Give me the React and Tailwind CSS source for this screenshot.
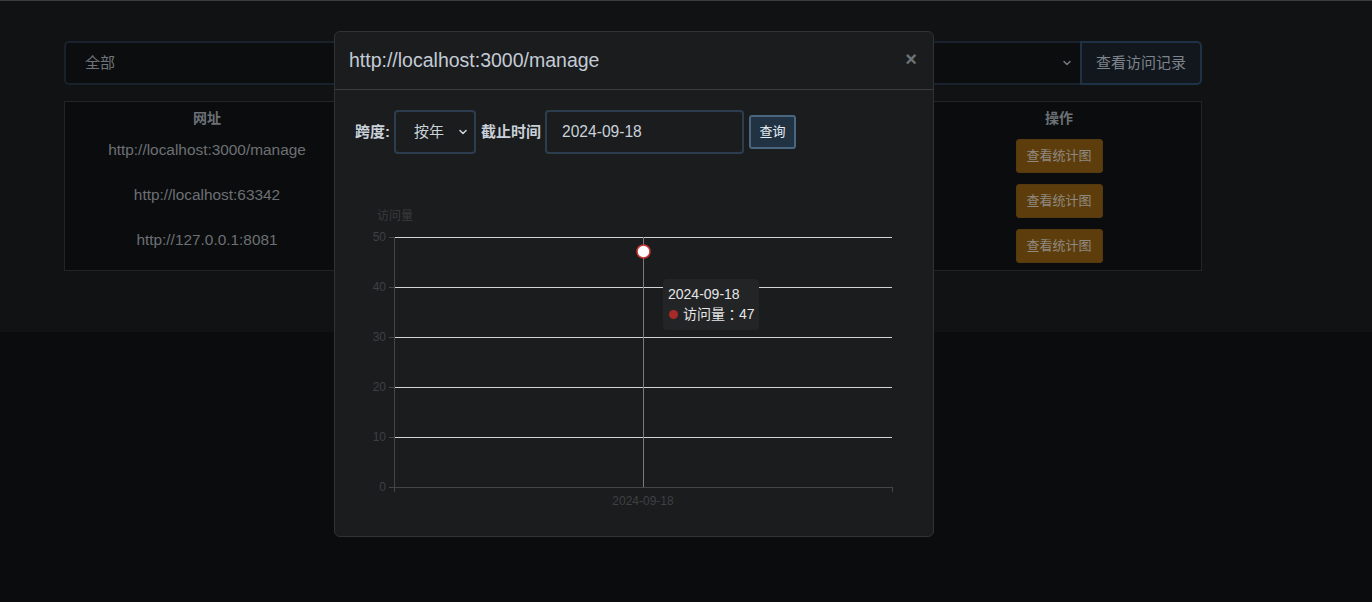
import React from "react";

const FONT = { fontFamily: '"Liberation Sans", "Noto Sans CJK SC", sans-serif' };
const FONT_TC = { fontFamily: '"Noto Sans CJK TC", "Noto Sans CJK SC", sans-serif' };

function Chevron({ className }) {
  return (
    <svg className={className} width="10" height="10" viewBox="0 0 10 10" fill="none">
      <path d="M2 3.5 L5 6.5 L8 3.5" stroke="currentColor" strokeWidth="1.6" strokeLinecap="round" strokeLinejoin="round" />
    </svg>
  );
}

const rows = [
  "http://localhost:3000/manage",
  "http://localhost:63342",
  "http://127.0.0.1:8081",
];

function Chart() {
  const levels = [50, 40, 30, 20, 10, 0];
  const yOf = (v) => 317 - v * 5;
  return (
    <div className="relative h-[350px] w-full">
      <svg width="598" height="350" viewBox="0 0 598 350" className="block">
        <text x="42" y="47" fontSize="12" fill="#3a3b3d" dominantBaseline="middle" style={FONT}>访问量</text>
        {levels.map((v) => (
          <g key={v}>
            {v !== 0 && (
              <line x1="59" x2="557" y1={yOf(v) + 0.5} y2={yOf(v) + 0.5} stroke="#d4d4d4" strokeWidth="1" />
            )}
            <line x1="54" x2="59" y1={yOf(v) + 0.5} y2={yOf(v) + 0.5} stroke="#434547" strokeWidth="1" />
            <text x="51" y={yOf(v) + 1} fontSize="12" fill="#3e4042" textAnchor="end" dominantBaseline="middle" style={FONT}>{v}</text>
          </g>
        ))}
        <line x1="59.5" x2="59.5" y1="67" y2="322" stroke="#434547" strokeWidth="1" />
        <line x1="59" x2="558" y1="317.5" y2="317.5" stroke="#434547" strokeWidth="1" />
        <line x1="557.5" x2="557.5" y1="317" y2="322" stroke="#434547" strokeWidth="1" />
        <line x1="308.5" x2="308.5" y1="67" y2="317" stroke="#7a7b7d" strokeWidth="1" />
        <text x="308" y="332" fontSize="12" fill="#3e4042" textAnchor="middle" dominantBaseline="middle" style={FONT}>2024-09-18</text>
        <circle cx="308.5" cy="81.5" r="6.5" fill="#ffffff" stroke="#c23531" strokeWidth="1.5" />
      </svg>
      <div
        className="absolute left-[328px] top-[109px] h-[51px] whitespace-nowrap rounded bg-[#222426] pl-[5px] pr-[4px] pt-[5px] text-[14px] leading-[20px] text-[#e6e6e6]"
        style={FONT}
      >
        <div>2024-09-18</div>
        <div className="flex items-center">
          <span className="mr-[5px] ml-[1px] inline-block h-[9px] w-[9px] rounded-full bg-[#a82a28]" />
          <span>访问量</span>
          <span style={FONT_TC}>：</span>
          <span>47</span>
        </div>
      </div>
    </div>
  );
}

export default function App() {
  return (
    <div className="min-h-[602px] bg-[#0b0c0d]" style={FONT}>
      <div className="border-t border-[#3c3d3f] bg-[#111214] pb-[61px]">
        <div className="mx-[64px] w-[1138px] pt-[40px]">
          <div className="flex h-[44px]">
            <div className="flex flex-1 items-center justify-between rounded-l-[5px] border-2 border-r-0 border-[#18212c] bg-[#0c0d0e] pl-[19px] pr-[8px] text-[15px] text-[#6f757b]">
              <span>全部</span>
              <Chevron className="text-[#6f757b]" />
            </div>
            <div className="flex w-[122px] items-center justify-center rounded-r-[5px] border-2 border-[#1f3245] bg-[#12171d] text-[15px] text-[#7d848c]">
              查看访问记录
            </div>
          </div>
          <div className="mt-[16px] border border-[#232426] bg-[#0b0c0d]">
            <div className="grid h-[33px] grid-cols-4 items-center text-center text-[14px] font-bold text-[#6b7177]">
              <div>网址</div>
              <div />
              <div />
              <div>操作</div>
            </div>
            {rows.map((url) => (
              <div key={url} className="grid h-[45px] grid-cols-4 text-center text-[15.4px] text-[#6b7075]">
                <div className="pt-[5px] leading-[20px]">{url}</div>
                <div />
                <div />
                <div className="flex justify-center pt-[4px]">
                  <div className="flex h-[34px] w-[87px] items-center justify-center rounded-[3px] border border-[#553a0f] bg-[#5e3d0c] text-[13px] text-[#8e8a82]">
                    查看统计图
                  </div>
                </div>
              </div>
            ))}
          </div>
        </div>
      </div>

      {/* Modal */}
      <div className="absolute left-[334px] top-[31px] w-[600px] rounded-[6px] border border-[#303234] bg-[#1b1c1e]">
        <div className="flex h-[58px] items-center justify-between border-b border-[#3b3c3e] pl-[14px] pr-[16px]">
          <span className="text-[19.5px] text-[#c3cbd5]">http://localhost:3000/manage</span>
          <span className="-mt-[4px] text-[20px] font-bold leading-none text-[#6e7378]">×</span>
        </div>
        <div className="px-0 pb-[16px] pt-[20px]">
          <div className="flex items-center pl-[20px]">
            <span className="text-[15px] font-bold text-[#c9d1d9]">跨度:</span>
            <div className="ml-[4px] flex h-[44px] w-[82px] items-center justify-between rounded-[4px] border-2 border-[#2c3d4f] pl-[18px] pr-[6px] text-[15px] text-[#c9d1d9]">
              <span>按年</span>
              <Chevron className="text-[#c9d1d9]" />
            </div>
            <span className="ml-[5px] text-[15px] font-bold text-[#c9d1d9]">截止时间</span>
            <div className="ml-[4px] flex h-[44px] w-[199px] items-center rounded-[4px] border-2 border-[#2c3d4f] pl-[15px] text-[15.6px] text-[#c9d1d9]">
              2024-09-18
            </div>
            <div className="ml-[5px] flex h-[34px] w-[47px] items-center justify-center rounded-[3px] border-2 border-[#4a6580] bg-[#213243] text-[13px] text-[#e8edf2]">
              查询
            </div>
          </div>
          <div className="mt-[16px]">
            <Chart />
          </div>
        </div>
      </div>
    </div>
  );
}
